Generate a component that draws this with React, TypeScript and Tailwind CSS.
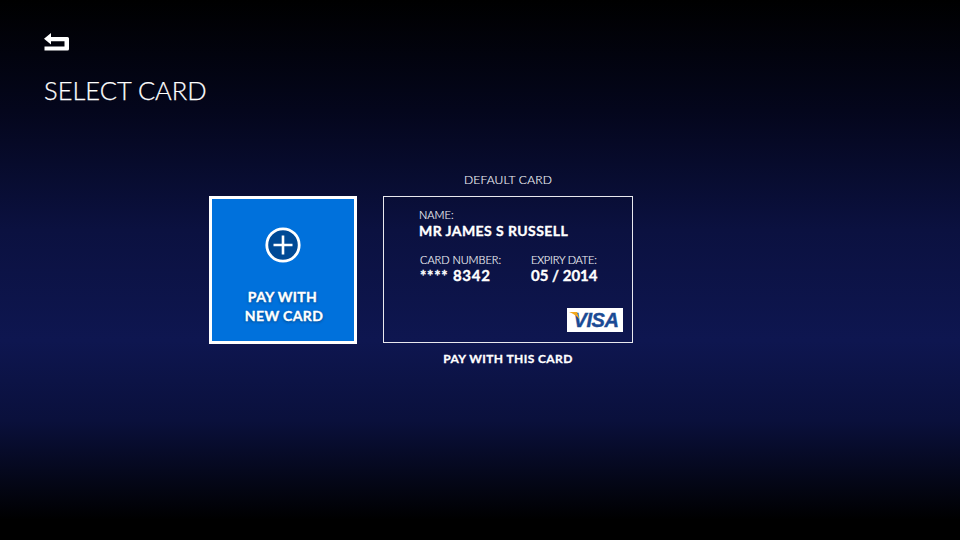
import React from 'react';

function BackIcon() {
  return (
    <svg width="26" height="18" viewBox="0 0 26 18" className="block">
      <path d="M7 0 L7 4 L23.5 4 Q25 4 25 5.5 L25 16 Q25 17.5 23.5 17.5 L0.5 17.5 L0.5 13.4 L20.5 13.4 L20.5 8.2 L7 8.2 L7 11.5 L0 5.8 Z" fill="#fff" />
    </svg>
  );
}

function PlusIcon() {
  return (
    <svg width="36" height="36" viewBox="0 0 36 36" className="block">
      <circle cx="18" cy="18" r="16.2" fill="#004a96" stroke="#fff" strokeWidth="2.8" />
      <path d="M18 8.5 V27.5 M8.5 18 H27.5" stroke="#fff" strokeWidth="2.6" />
    </svg>
  );
}

function VisaLogo() {
  return (
    <div className="relative w-[56px] h-[24px] bg-white overflow-hidden flex items-center justify-center">
      <span className="ml-[2px] font-['Liberation_Sans',sans-serif] font-bold italic text-[20px] leading-none tracking-[-0.4px] text-[#1a4a94] [-webkit-text-stroke:0.4px_#1a4a94]">VISA</span>
      <svg width="11" height="8" viewBox="0 0 11 8" className="absolute left-[2px] top-[4px]">
        <path d="M0 0 H8 L10.5 7.5 C8 4 4 1.5 0 0 Z" fill="#f2a81d" />
      </svg>
    </div>
  );
}

export default function App() {
  return (
    <div className="w-[960px] h-[540px] overflow-hidden flex flex-col text-white font-['Lato',sans-serif] bg-[linear-gradient(to_bottom,#000000_0px,#04061c_110px,#0b1140_230px,#0e1650_340px,#0a103c_420px,#000000_520px)]">
      <div className="pl-[44px] pt-[33px]">
        <BackIcon />
        <h1 className="mt-[23px] text-[25.5px] leading-[32px] font-light [-webkit-text-stroke:0.25px_#ffffff]">SELECT CARD</h1>
      </div>

      <div className="flex items-start ml-[209px] mt-[67px] gap-[26px]">
        <div className="mt-[23px] w-[148px] h-[148px] border-[3px] border-white bg-[#0071dc] flex flex-col items-center">
          <div className="mt-[28px]">
            <PlusIcon />
          </div>
          <div className="mt-[24px] ml-[2px] text-center text-[14px] leading-[19px] font-bold tracking-[0.35px] [-webkit-text-stroke:0.35px_#ffffff] [text-shadow:0_1px_3px_rgba(0,0,0,0.45)]">
            <div className="mr-[3px]">PAY WITH</div>
            <div>NEW CARD</div>
          </div>
        </div>

        <div className="w-[250px] flex flex-col items-center">
          <div className="h-[23px] text-[12px] leading-[14px] font-light tracking-[0.2px] text-[#f2f3f8] [-webkit-text-stroke:0.15px_#ffffff]">DEFAULT CARD</div>
          <div className="w-full h-[147px] border border-[#e8e8ee] pl-[35px] pt-[11px] pr-[9px] flex flex-col">
            <div className="text-[11px] leading-[13px] font-light text-[#f2f3f8] [-webkit-text-stroke:0.15px_#ffffff]">NAME:</div>
            <div className="text-[14px] leading-[19px] font-bold tracking-[0.42px] [-webkit-text-stroke:0.35px_#ffffff]">MR JAMES S RUSSELL</div>
            <div className="flex mt-[13px] ml-[1px]">
              <div className="w-[111px]">
                <div className="text-[11px] leading-[13px] font-light text-[#f2f3f8] tracking-[-0.05px] [-webkit-text-stroke:0.15px_#ffffff]">CARD NUMBER:</div>
                <div className="mt-[1px] text-[15px] leading-[17px] font-bold tracking-[0.75px] [-webkit-text-stroke:0.35px_#ffffff]">**** 8342</div>
              </div>
              <div>
                <div className="text-[11px] leading-[13px] font-light text-[#f2f3f8] tracking-[-0.2px] [-webkit-text-stroke:0.15px_#ffffff]">EXPIRY DATE:</div>
                <div className="mt-[1px] text-[15px] leading-[17px] font-bold [-webkit-text-stroke:0.35px_#ffffff]">05 / 2014</div>
              </div>
            </div>
            <div className="mt-auto mb-[10px] self-end">
              <VisaLogo />
            </div>
          </div>
          <div className="mt-[8px] text-[12px] leading-[16px] font-bold tracking-[0.4px] [-webkit-text-stroke:0.3px_#ffffff]">PAY WITH THIS CARD</div>
        </div>
      </div>
    </div>
  );
}
